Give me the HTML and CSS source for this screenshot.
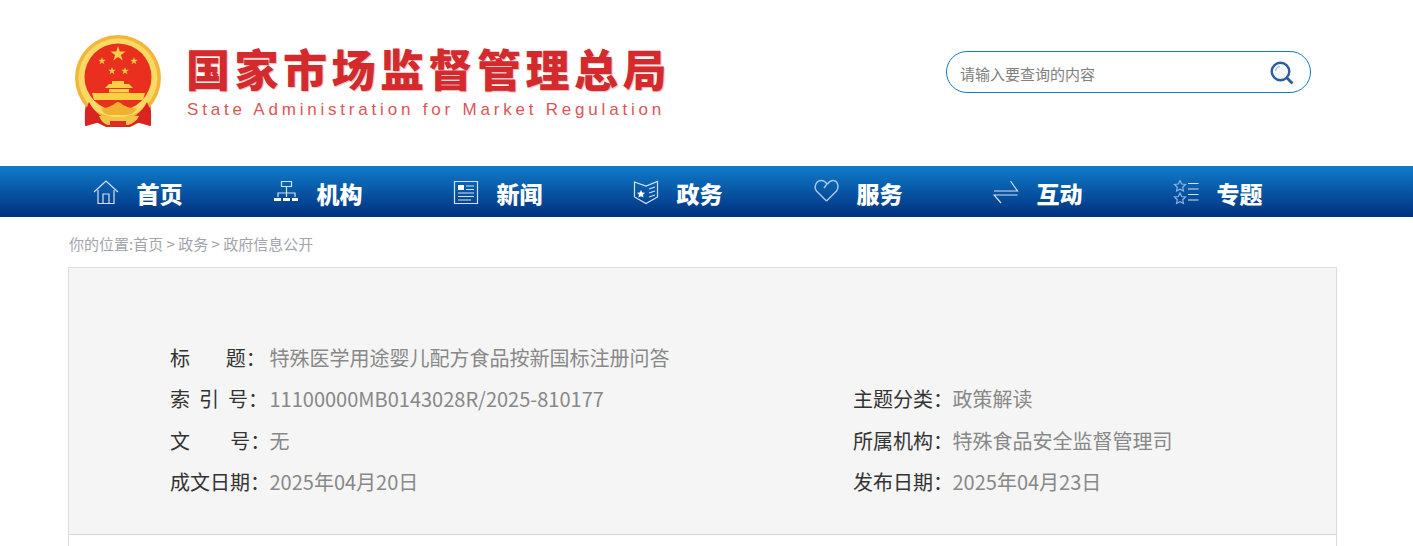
FILE: index.html
```html
<!DOCTYPE html>
<html lang="zh-CN">
<head>
    <meta charset="UTF-8">
    <meta name="viewport" content="width=device-width, initial-scale=1.0">
    <title>特殊医学用途婴儿配方食品按新国标注册问答</title>
    <link rel="stylesheet" href="styles.css">
</head>
<body>

    <header class="top">
        <div class="logo">
            <!-- National emblem -->
            <svg class="emblem" width="90" height="94" viewBox="0 0 90 94">
                <defs>
                    <path id="star" d="M0-1 L.225-.309 L.951-.309 L.363.118 L.588.809 L0 .382 L-.588.809 L-.363.118 L-.951-.309 L-.225-.309Z"/>
                </defs>
                <path d="M13 66 C10 76 11 85 11 92 L22 88 L32 93 H56 L66 88 L77 92 C77 85 78 76 75 66 Z" fill="#d92420"/>
                <circle cx="44" cy="44" r="43" fill="#f4b63a"/>
                <circle cx="44" cy="44" r="39.500" fill="#fbd962"/>
                <circle cx="44" cy="43" r="33.500" fill="#e9301f"/>
                <g fill="#f8cf45">
                    <use href="#star" transform="translate(44 20) scale(8)"/>
                    <use href="#star" transform="translate(28 27) scale(4)"/>
                    <use href="#star" transform="translate(60 27) scale(4)"/>
                    <use href="#star" transform="translate(38 37) scale(4)"/>
                    <use href="#star" transform="translate(51 37) scale(4)"/>
                    <path d="M31 54 H59 L55 50 H50 V47 H38 V50 H35 Z"/>
                    <rect x="35" y="55" width="20" height="3.500"/>
                    <path d="M18 59 H71 L69 66 H20 Z"/>
                </g>
                <path d="M15 68 C21 80 31 85 39 87 L38 92 L26 88 L12 92 C11 84 11 76 15 68 Z" fill="#d92420"/>
                <path d="M73 68 C67 80 57 85 49 87 L50 92 L62 88 L76 92 C77 84 77 76 73 68 Z" fill="#d92420"/>
                <path d="M27 74 C32 75 36 72 39 71 C41 69 43 68 44 68 C45 68 47 69 49 71 C52 72 56 75 63 74 C61 79 56 81 51 81 H37 C32 81 29 79 27 74 Z" fill="#f0b032"/>
                <path d="M25 82 C31 81 36 84 44 83 C52 84 57 81 65 82 C63 87 58 90 54 91 H34 C30 90 27 87 25 82 Z" fill="#f4c347"/>
                <path d="M36 87 H52 V92 H36 Z" fill="#e02c22"/>
            </svg>
            <div class="logo-text">
                <div class="logo-cn">国家市场监督管理总局</div>
                <div class="logo-en">State Administration for Market Regulation</div>
            </div>
        </div>
        <div class="search">
            <span class="search-text">请输入要查询的内容</span>
            <svg class="search-icon" width="24" height="24" viewBox="0 0 24 24">
                <circle cx="10.500" cy="10.500" r="8.800" fill="#f4f8fc" stroke="#2f5c9c" stroke-width="2.400"/>
                <path d="M5.500 10 A5.500 5.500 0 0 1 10 5.500" fill="none" stroke="#9db7d8" stroke-width="1.200"/>
                <path d="M17 17 L22.500 22.500" stroke="#2f5c9c" stroke-width="2.800"/>
            </svg>
        </div>
    </header>

    <nav class="nav">
        <a class="nav-item" href="#">
            <svg class="nav-icon" width="26" height="26" viewBox="0 0 26 26">
                <path d="M1 13 L13 2 L25 13 M5 11 V24.500 H21 V11 M10 24.500 V15 H16 V24.500"/>
            </svg>
            首页
        </a>
        <a class="nav-item" href="#">
            <svg class="nav-icon" width="26" height="26" viewBox="0 0 26 26">
                <path d="M8.500 2.500 H18.500 V7.500 H8.500 Z M13.500 7.500 V18 M5 18 V14 H22 V18"/>
                <path class="solid" d="M1 19 H8 V22 H1 Z M10 19 H17 V22 H10 Z M19 19 H25 V22 H19 Z"/>
            </svg>
            机构
        </a>
        <a class="nav-item" href="#">
            <svg class="nav-icon" width="26" height="26" viewBox="0 0 26 26">
                <path d="M1.500 2.500 H24.500 V24.500 H1.500 Z M5 14 H21 M5 17.500 H21 M5 21 H18 M13 7 H21 M13 10.500 H21"/>
                <path class="solid" d="M5 6 H11 V11 H5 Z"/>
            </svg>
            新闻
        </a>
        <a class="nav-item" href="#">
            <svg class="nav-icon" width="26" height="26" viewBox="0 0 26 26">
                <path d="M1.500 3 L13 7 L24.500 2.500 V18 L13 24.500 L1.500 18 Z M16 10 L22 8 M16 14 L22 12 M16 18 L22 16"/>
                <path class="solid" d="M8 11 L9.200 13.500 L12 13.800 L10 15.700 L10.500 18.500 L8 17.200 L5.500 18.500 L6 15.700 L4 13.800 L6.800 13.500 Z"/>
            </svg>
            政务
        </a>
        <a class="nav-item" href="#">
            <svg class="nav-icon heart" width="26" height="26" viewBox="0 0 26 26">
                <path d="M13.500 22 L3.500 12 C0.500 8 3 1.500 8.500 1.500 C10.500 1.500 12.500 2.500 14 5 L11 9 M14.500 5 C16 2.500 18 1.500 20 1.500 C24.500 1.500 26.500 7.500 23.500 12 L13.500 22"/>
            </svg>
            服务
        </a>
        <a class="nav-item" href="#">
            <svg class="nav-icon" width="26" height="26" viewBox="0 0 26 26">
                <path d="M1 12 H24.500 L17.500 2 M24.500 16 H1 L8 24"/>
            </svg>
            互动
        </a>
        <a class="nav-item" href="#">
            <svg class="nav-icon" width="26" height="26" viewBox="0 0 26 26">
                <path class="star" d="M7 1.500 L8.700 5 L12.500 5.500 L9.700 8.200 L10.400 12 L7 10.200 L3.600 12 L4.300 8.200 L1.500 5.500 L5.300 5 Z"/>
                <path class="star" d="M7 14 L8.700 17.500 L12.500 18 L9.700 20.700 L10.400 24.500 L7 22.700 L3.600 24.500 L4.300 20.700 L1.500 18 L5.300 17.500 Z"/>
                <path d="M15 4.500 H25.500 M15 10 H25.500 M15 15.500 H25.500 M15 21 H25.500"/>
            </svg>
            专题
        </a>
    </nav>

    <div class="page">
        <div class="crumb">你的位置:首页 &gt; 政务 &gt; 政府信息公开</div>

        <div class="box">
            <div class="info">
                <div class="row">
                    <div class="field">
                        <span class="label">标&nbsp;&nbsp;&nbsp;&nbsp;&nbsp;&nbsp;&nbsp;&nbsp;题：</span>
                        <span class="value">特殊医学用途婴儿配方食品按新国标注册问答</span>
                    </div>
                </div>
                <div class="row">
                    <div class="field">
                        <span class="label">索&nbsp;&nbsp;引&nbsp;&nbsp;号：</span>
                        <span class="value">11100000MB0143028R/2025-810177</span>
                    </div>
                    <div class="field">
                        <span class="label">主题分类：</span>
                        <span class="value">政策解读</span>
                    </div>
                </div>
                <div class="row">
                    <div class="field">
                        <span class="label">文&nbsp;&nbsp;&nbsp;&nbsp;&nbsp;&nbsp;&nbsp;&nbsp;&nbsp;号：</span>
                        <span class="value">无</span>
                    </div>
                    <div class="field">
                        <span class="label">所属机构：</span>
                        <span class="value">特殊食品安全监督管理司</span>
                    </div>
                </div>
                <div class="row">
                    <div class="field">
                        <span class="label">成文日期：</span>
                        <span class="value">2025年04月20日</span>
                    </div>
                    <div class="field">
                        <span class="label">发布日期：</span>
                        <span class="value">2025年04月23日</span>
                    </div>
                </div>
            </div>
            <div class="box-rest"></div>
        </div>
    </div>

</body>
</html>
```

FILE: styles.css
```css
html {
    overflow: hidden;
}

body {
    margin: 0;
    font-family: "Noto Sans CJK SC", "Noto Sans", sans-serif;
    background-color: #fff;
    color: #333;
}

a {
    text-decoration: none;
}

.top {
    display: flex;
    justify-content: space-between;
    align-items: flex-start;
    height: 166px;
    padding: 0 102px 0 74px;
}

.logo {
    display: flex;
    padding-top: 34px;
}

.emblem {
    flex: none;
    margin-right: 22px;
}

.logo-text {
    padding-top: 9px;
    color: #d42a2e;
}

.logo-cn {
    font-size: 44px;
    font-weight: 900;
    line-height: 50px;
    letter-spacing: 4.500px;
    white-space: nowrap;
    text-shadow: 1px 1px 1px rgba(150, 40, 40, 0.3);
}

.logo-en {
    font-family: "Liberation Sans", sans-serif;
    font-size: 17px;
    line-height: 20px;
    letter-spacing: 3.800px;
    white-space: nowrap;
    margin-top: 7px;
    padding-left: 1px;
    opacity: 0.8;
}

.search {
    display: flex;
    align-items: center;
    justify-content: space-between;
    box-sizing: border-box;
    width: 365px;
    height: 42px;
    margin-top: 51px;
    padding: 0 16px 0 13px;
    border: 1px solid #1a7ac8;
    border-radius: 21px;
}

.search-text {
    padding-top: 2px;
    font-size: 15px;
    color: #808080;
}

.search-icon {
    margin-top: 2px;
}

.nav {
    display: flex;
    height: 51px;
    padding-left: 93px;
    background: linear-gradient(to bottom, #0f7cca, #00307f);
}

.nav-item {
    display: flex;
    align-items: center;
    width: 180px;
    padding-top: 2px;
    box-sizing: border-box;
    font-size: 23px;
    font-weight: 900;
    color: #fff;
}

.nav-icon {
    flex: none;
    margin-right: 17.500px;
    margin-top: -2px;
    fill: none;
    stroke: #d5e2f2;
    stroke-width: 1.200;
}

.nav-icon.heart {
    stroke: #a9c4e2;
    stroke-width: 1.500;
}

.nav-icon .solid {
    fill: #fff;
    stroke: none;
}

.nav-icon .star {
    stroke: #8fb4dc;
}

.page {
    width: 1269px;
    margin-left: 68px;
}

.crumb {
    height: 50px;
    padding-left: 1px;
    font-size: 15px;
    line-height: 54px;
    color: #a3a3ab;
}

.box {
    border: 1px solid #d6deea;
    border-bottom: none;
}

.info {
    height: 267px;
    box-sizing: border-box;
    padding: 69px 0 0 101px;
    background-color: #f5f5f5;
    border-bottom: 1px solid #d6d6d6;
}

.row {
    display: grid;
    grid-template-columns: 683px 1fr;
    height: 41.400px;
    font-size: 20px;
    line-height: 41.400px;
}

.field {
    display: flex;
    white-space: nowrap;
}

.label {
    width: 99.500px;
    color: #333;
}

.value {
    color: #888;
}

.box-rest {
    height: 12px;
}
```
